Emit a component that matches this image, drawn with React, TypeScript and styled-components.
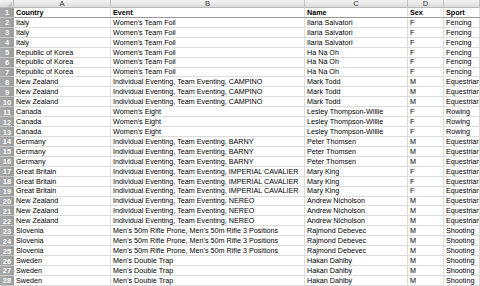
import React from 'react';
import styled, { createGlobalStyle } from 'styled-components';

const GlobalStyle = createGlobalStyle`
  html, body {
    margin: 0;
    padding: 0;
    background: #fff;
    overflow: hidden;
  }
`;

const COLS = '14px 97px 194px 103px 36px 1fr';
const ROW_H = 9.93;

const Sheet = styled.div`
  width: 480px;
  height: 286px;
  overflow: hidden;
  font-family: "Liberation Sans", Arial, sans-serif;
  font-size: 7.2px;
  color: #000;
  background: #fff;
`;

const ColumnBar = styled.div`
  display: grid;
  grid-template-columns: ${COLS};
  height: 8px;
  background: linear-gradient(#f3f3f3, #dcdcdc);
  border-bottom: 1px solid #b9b9b9;
  box-sizing: border-box;
`;

const Corner = styled.div`
  position: relative;
  border-right: 1px solid #b9b9b9;
  &::after {
    content: '';
    position: absolute;
    right: 1px;
    bottom: 1px;
    border-style: solid;
    border-width: 0 0 5px 5px;
    border-color: transparent transparent #c4c4c4 transparent;
  }
`;

const ColLabel = styled.div`
  display: flex;
  align-items: center;
  justify-content: center;
  border-right: 1px solid #c2c2c2;
  color: #3a3a3a;
  font-size: 7.5px;
  line-height: 1;
`;

const Row = styled.div<{ $head?: boolean }>`
  display: grid;
  grid-template-columns: ${COLS};
  height: ${ROW_H}px;
  box-sizing: border-box;
  border-bottom: 1px solid ${p => (p.$head ? '#9a9a9a' : '#dcdcdc')};
  font-weight: ${p => (p.$head ? 'bold' : 'normal')};
`;

const RowNum = styled.div`
  display: flex;
  align-items: center;
  justify-content: center;
  background: linear-gradient(90deg, #a9a9a9, #9c9c9c);
  color: #fff;
  font-weight: bold;
  font-size: 7.5px;
  box-shadow: inset 0 -1px 0 #c9c9c9;
  margin-bottom: -1px;
`;

const Cell = styled.div`
  display: flex;
  align-items: center;
  padding-left: 2px;
  border-right: 1px solid #dcdcdc;
  white-space: nowrap;
  overflow: hidden;
  line-height: 1;
`;

const rows: string[][] = [
  ['Country', 'Event', 'Name', 'Sex', 'Sport'],
  ...Array(3).fill(['Italy', 'Women\u2019s Team Foil', 'Ilaria Salvatori', 'F', 'Fencing']),
  ...Array(3).fill(['Republic of Korea', 'Women\u2019s Team Foil', 'Ha Na Oh', 'F', 'Fencing']),
  ...Array(3).fill(['New Zealand', 'Individual Eventing, Team Eventing, CAMPINO', 'Mark Todd', 'M', 'Equestrian']),
  ...Array(3).fill(['Canada', 'Women\u2019s Eight', 'Lesley Thompson-Willie', 'F', 'Rowing']),
  ...Array(3).fill(['Germany', 'Individual Eventing, Team Eventing, BARNY', 'Peter Thomsen', 'M', 'Equestrian']),
  ...Array(3).fill(['Great Britain', 'Individual Eventing, Team Eventing, IMPERIAL CAVALIER', 'Mary King', 'F', 'Equestrian']),
  ...Array(3).fill(['New Zealand', 'Individual Eventing, Team Eventing, NEREO', 'Andrew Nicholson', 'M', 'Equestrian']),
  ...Array(3).fill(['Slovenia', 'Men\u2019s 50m Rifle Prone, Men\u2019s 50m Rifle 3 Positions', 'Rajmond Debevec', 'M', 'Shooting']),
  ...Array(3).fill(['Sweden', 'Men\u2019s Double Trap', 'Hakan Dahlby', 'M', 'Shooting']),
];

export default function App() {
  return (
    <Sheet>
      <GlobalStyle />
      <ColumnBar>
        <Corner />
        {['A', 'B', 'C', 'D', ''].map((l, i) => (
          <ColLabel key={i}>{l}</ColLabel>
        ))}
      </ColumnBar>
      {rows.map((r, i) => (
        <Row key={i} $head={i === 0}>
          <RowNum>{i + 1}</RowNum>
          {r.map((v, j) => (
            <Cell key={j}>{v}</Cell>
          ))}
        </Row>
      ))}
    </Sheet>
  );
}
